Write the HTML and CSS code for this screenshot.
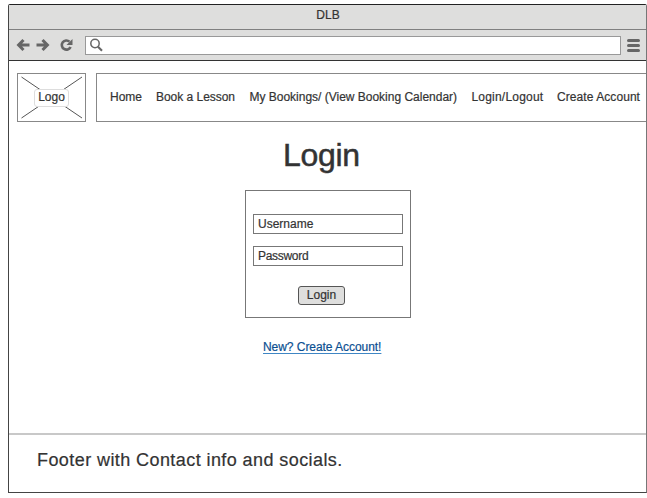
FILE: index.html
```html
<!DOCTYPE html>
<html lang="en">
<head>
<meta charset="utf-8">
<title>DLB</title>
<link rel="stylesheet" href="styles.css">
</head>
<body>
<div class="window">
  <div class="titlebar"><span class="t-title">DLB</span></div>
  <div class="toolbar">
    <svg class="controls" width="60" height="18" viewBox="0 0 60 18" fill="none" stroke="#666" stroke-width="3">
      <path d="M7.500 4 2.600 9l4.900 5M3 9h10.500"/>
      <path d="M26.500 4 31.400 9l-4.900 5M31 9H20.500"/>
      <path d="M53.500 5.600A4.600 4.600 0 1 0 54.600 11" stroke-width="2.600"/>
      <path d="M56.500 3v6h-6z" fill="#666" stroke="none"/>
    </svg>
    <div class="address">
      <svg width="14" height="14" viewBox="0 0 14 14" fill="none" stroke="#666">
        <circle cx="5" cy="5.500" r="4.200" stroke-width="1.500"/>
        <path d="m8 8.700 4 4" stroke-width="2.200"/>
      </svg>
    </div>
    <div class="menu"><i></i><i></i><i></i></div>
  </div>
  <header class="header">
    <div class="logo">
      <svg class="cross" width="67" height="46" viewBox="0 0 67 46" stroke="#555"><path d="M3.500 3 64 44M64 3 3.500 44"/></svg>
      <span class="logo-label">Logo</span>
    </div>
    <nav class="nav">
      <a class="n-home">Home</a>
      <a class="n-book">Book a Lesson</a>
      <a class="n-view">My Bookings/ (View Booking Calendar)</a>
      <a class="n-log">Login/Logout</a>
      <a class="n-create">Create Account</a>
    </nav>
  </header>
  <main class="main">
    <h1 class="heading">Login</h1>
    <form class="card">
      <div class="field"><span class="f-user">Username</span></div>
      <div class="field"><span class="f-pass">Password</span></div>
      <button class="submit" type="button">Login</button>
    </form>
    <a class="create">New? Create Account!</a>
  </main>
  <footer class="footer"><span>Footer with Contact info and socials.</span></footer>
</div>
</body>
</html>
```
FILE: styles.css
```css
* { box-sizing: border-box; }
body {
  margin: 0;
  background: #fff;
  color: #333;
  font: 12px/14px "Liberation Sans", Arial, sans-serif;
  -webkit-text-stroke: 0.2px;
  overflow: hidden;
}
svg { display: block; }
.window {
  display: flex;
  flex-direction: column;
  width: 639px;
  height: 489px;
  margin: 4px 0 0 8px;
  border: 1px solid #444;
  border-top-color: #222;
  border-right-color: #777;
  border-radius: 2px 2px 0 0;
}
.titlebar {
  height: 25px;
  padding: 3px 0 0 1px;
  background: #dededd;
  border-bottom: 1px solid #808080;
  text-align: center;
}
.toolbar {
  display: flex;
  align-items: center;
  height: 31px;
  padding: 0 6px;
  background: #dededd;
  border-bottom: 1px solid #333;
}
.controls { margin-left: 1px; }
.address {
  display: flex;
  align-items: center;
  width: 536px;
  height: 19px;
  margin-left: 9px;
  padding-left: 4px;
  background: #fff;
  border: 1px solid #999;
}
.menu {
  display: flex;
  flex-direction: column;
  gap: 2px;
  width: 13px;
  margin-left: 6px;
}
.menu i { height: 3px; border-radius: 1.5px; background: #666; }
.header { display: flex; gap: 10px; padding: 12px 0 0 8px; }
.logo {
  position: relative;
  display: flex;
  align-items: center;
  justify-content: center;
  width: 69px;
  height: 49px;
  border: 1px solid #888;
}
.cross { position: absolute; left: 0; top: 0; }
.logo-label {
  position: relative;
  width: 35px;
  height: 18px;
  border: 1px solid #ddd;
  border-radius: 3px;
  background: #fff;
  line-height: 14px;
  text-align: center;
}
.nav {
  display: flex;
  align-items: center;
  width: 550px;
  height: 49px;
  padding: 0 0 2px 13px;
  border: 1px solid #888;
  border-right: 0;
  white-space: nowrap;
}
.n-home { width: 46px; }
.n-book { width: 93.5px; letter-spacing: -0.03px; }
.n-view { width: 222px; letter-spacing: -0.01px; }
.n-log { width: 85.5px; letter-spacing: 0.2px; }
.n-create { letter-spacing: 0.07px; }
.main {
  display: flex;
  flex-direction: column;
  align-items: flex-start;
  flex: 1;
  padding-left: 236px;
}
.heading {
  margin: 15px 0 0 38px;
  font-size: 32px;
  line-height: 36px;
  font-weight: 400;
  letter-spacing: -0.3px;
  -webkit-text-stroke: 0.5px;
}
.card {
  display: flex;
  flex-direction: column;
  align-items: center;
  width: 166px;
  height: 128px;
  margin: 17px 0 0;
  padding-top: 23px;
  border: 1px solid #777;
}
.field {
  width: 150px;
  height: 20px;
  margin-bottom: 12px;
  padding: 2px 0 0 4px;
  border: 1px solid #777;
}
.f-pass { letter-spacing: -0.3px; }
.submit {
  width: 47px;
  height: 19px;
  margin: 8px 13px 0 0;
  padding: 0 0 1px;
  border: 1px solid #555;
  border-radius: 3px;
  background: #dededd;
  color: #333;
  font: inherit;
}
.create {
  margin: 22px 0 0 18px;
  color: #0b4f91;
  letter-spacing: -0.05px;
  text-decoration: underline;
  text-decoration-color: #3f86c4;
  text-underline-offset: 2px;
}
.footer {
  height: 59px;
  padding: 15px 0 0 28px;
  border-top: 2px solid #c8c8c8;
  font-size: 18px;
  line-height: 20px;
  letter-spacing: 0.42px;
}
```
